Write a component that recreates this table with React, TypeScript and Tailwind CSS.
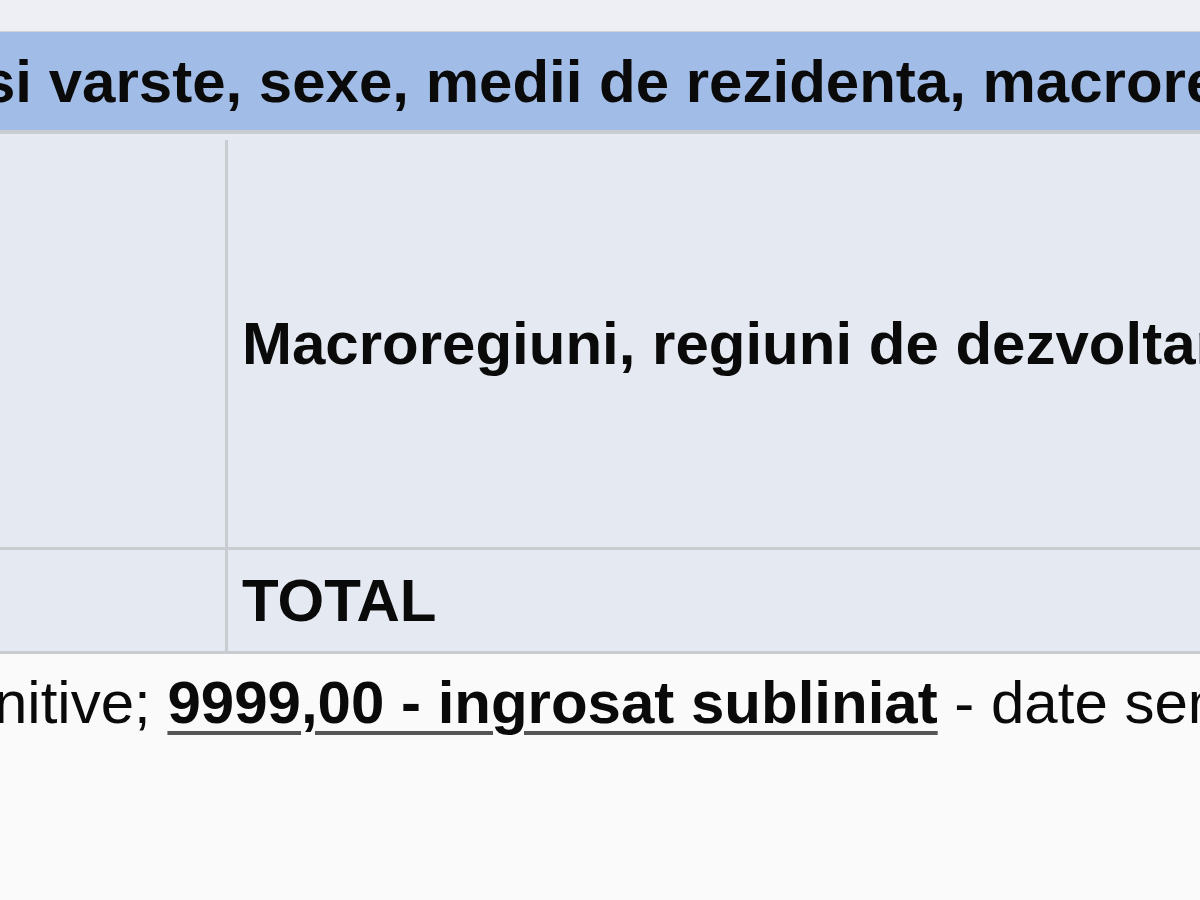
import React from "react";

export default function App() {
  return (
    <div
      className="w-[1200px] h-[900px] overflow-hidden bg-[#fafafa] text-[#0a0a0a]"
      style={{ fontFamily: '"Liberation Sans", Arial, sans-serif' }}
    >
      <div className="h-[31px] bg-[#edeff4]" />
      <div className="h-[1px] bg-[#cfd2d6]" />
      <div className="h-[98px] bg-[#a2bce8] flex items-center pt-[2px]">
        <div className="-ml-[18px] whitespace-nowrap text-[60px] leading-[60px] font-bold">
          si varste, sexe, medii de rezidenta, macroregiuni
        </div>
      </div>
      <div className="h-[4px] bg-[#c9cdd2]" />
      <div className="h-[6px] bg-[#e5eaf2]" />
      <div className="flex h-[407px] bg-[#e5eaf2]">
        <div className="w-[228px] shrink-0 border-r-[3px] border-[#c9cdd2]" />
        <div className="flex-1 flex items-center pl-[14px] whitespace-nowrap overflow-hidden text-[60px] leading-[60px] font-bold">
          Macroregiuni, regiuni de dezvoltare si judete
        </div>
      </div>
      <div className="h-[3px] bg-[#c9cdd2]" />
      <div className="flex h-[101px] bg-[#e5eaf2]">
        <div className="w-[228px] shrink-0 border-r-[3px] border-[#c9cdd2]" />
        <div className="flex-1 flex items-center pl-[14px] whitespace-nowrap text-[60px] leading-[60px] font-bold">
          TOTAL
        </div>
      </div>
      <div className="h-[3px] bg-[#c9cdd2]" />
      <div className="pt-[19px] -ml-[6px] whitespace-nowrap text-[60px] leading-[60px]">
        nitive;{" "}
        <span className="font-bold underline decoration-4 decoration-[#555555] underline-offset-8">
          9999,00 - ingrosat subliniat
        </span>{" "}
        - date semidefinitive
      </div>
    </div>
  );
}
